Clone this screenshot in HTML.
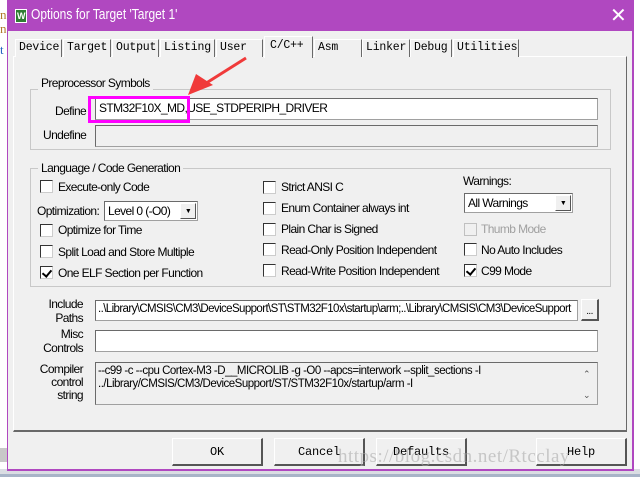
<!DOCTYPE html>
<html><head><meta charset="utf-8"><style>
*{margin:0;padding:0;box-sizing:border-box}
body{width:640px;height:477px;overflow:hidden;background:#fff;position:relative;font-family:"Liberation Sans",Arial,sans-serif;font-size:12px;color:#000;letter-spacing:-0.6px}
.a{position:absolute}
.mono{font-family:"Liberation Mono","DejaVu Sans Mono",monospace;font-size:11.5px;letter-spacing:-0.2px}
.tab{position:absolute;top:39px;height:18px;border:1px solid #fff;border-right:1px solid #696969;border-bottom:none;padding:1px 0 0 3px;background:#f0f0f0}
.cb{position:absolute;width:13px;height:13px;background:#fff;border:1px solid #333;border-right-color:#ccc;border-bottom-color:#ccc}
.cb.k::after{content:"";position:absolute;left:3px;top:1px;width:4px;height:7px;border:solid #000;border-width:0 2px 2px 0;transform:rotate(40deg)}
.lbl{position:absolute;font-size:12px}
.grp{position:absolute;border:1px solid #c8c8c8}
.inp{position:absolute;background:#fff;border:1px solid #a0a0a0;border-top-color:#6a6a6a;border-left-color:#6a6a6a}
.btn{position:absolute;top:438px;height:28px;width:91px;border:1px solid #fff;border-right:2px solid #555;border-bottom:2px solid #555;background:#f0f0f0;text-align:center;padding-top:6px;font-family:"Liberation Mono",monospace;font-size:12px;letter-spacing:-0.2px}
</style></head><body>
<div class="a" style="left:0;top:0;width:7px;height:477px;background:#fff"></div>
<div class="a" style="left:0;top:8px;color:#b07a2a;font-family:'Liberation Serif';font-size:13px;line-height:14px">n<br>n</div>
<div class="a" style="left:0;top:42px;color:#2060c0;font-family:'Liberation Serif';font-size:13px">t</div>
<div class="a" style="left:0;top:448px;width:8px;height:14px;background:#c8c8c8"></div>
<div class="a" style="left:0;top:469px;width:640px;height:8px;background:#dadde3"></div>
<div class="a" style="left:0;top:474px;width:640px;height:3px;background:#a8b4c8"></div>
<div class="a" style="left:7px;top:0;width:627px;height:471px;background:#b048c0"></div>
<div class="a" style="left:8px;top:31px;width:624px;height:438px;background:#f0f0f0"></div>
<div class="a" style="left:15px;top:9px;width:12px;height:14px;background:#2e7d32;border:1px solid #fff;color:#fff;font-size:9px;font-weight:bold;text-align:center;line-height:12px">W</div>
<div class="a" style="left:31px;top:6px;color:#fff;font-size:15px;letter-spacing:0;transform:scaleX(0.8);transform-origin:left;white-space:nowrap">Options for Target 'Target 1'</div>
<div class="a" style="left:610px;top:3px;color:#fff;font-size:20px;font-weight:300">✕</div>
<div class="a" style="left:13px;top:56px;width:614px;height:376px;border:1px solid #fff;border-right:1px solid #696969;border-bottom:2px solid #696969"></div>
<div class="tab mono" style="left:15px;width:47px">Device</div>
<div class="tab mono" style="left:63px;width:48px">Target</div>
<div class="tab mono" style="left:112px;width:47px">Output</div>
<div class="tab mono" style="left:160px;width:55px">Listing</div>
<div class="tab mono" style="left:216px;width:47px">User</div>
<div class="tab mono" style="left:264px;top:36px;height:22px;width:49px;padding:2px 0 0 5px">C/C++</div>
<div class="tab mono" style="left:314px;width:48px">Asm</div>
<div class="tab mono" style="left:362px;width:48px">Linker</div>
<div class="tab mono" style="left:410px;width:42px">Debug</div>
<div class="tab mono" style="left:453px;width:66px">Utilities</div>
<div class="grp" style="left:30px;top:89px;width:581px;height:61px"></div>
<div class="lbl" style="left:38px;top:76px;background:#f0f0f0;padding:0 3px">Preprocessor Symbols</div>
<div class="lbl" style="left:55px;top:104px">Define</div>
<div class="inp" style="left:95px;top:98px;width:503px;height:22px;padding:2px 0 0 3px">STM32F10X_MD,USE_STDPERIPH_DRIVER</div>
<div class="lbl" style="left:43px;top:128px">Undefine</div>
<div class="inp" style="left:95px;top:125px;width:503px;height:22px;background:#f0f0f0"></div>
<div class="a" style="left:88px;top:96px;width:102px;height:27px;border:3px solid #ff00ff"></div>
<svg class="a" style="left:180px;top:55px" width="75" height="48"><line x1="66" y1="3" x2="20" y2="32" stroke="#f03a3a" stroke-width="3"/><polygon points="8,40 16,19 33,30" fill="#f03a3a"/></svg>
<div class="grp" style="left:30px;top:168px;width:581px;height:119px"></div>
<div class="lbl" style="left:38px;top:161px;background:#f0f0f0;padding:0 3px">Language / Code Generation</div>
<div class="cb" style="left:40px;top:180px"></div><div class="lbl" style="left:58px;top:180px">Execute-only Code</div>
<div class="lbl" style="left:37px;top:204px">Optimization:</div>
<div class="inp" style="left:104px;top:201px;width:94px;height:20px;padding:2px 0 0 3px">Level 0 (-O0)</div>
<div class="a" style="left:180px;top:203px;width:16px;height:16px;background:#f0f0f0;border:1px solid #fff;border-right-color:#555;border-bottom-color:#555;font-size:7px;text-align:center;line-height:15px">▼</div>
<div class="cb" style="left:40px;top:224px"></div><div class="lbl" style="left:58px;top:223px">Optimize for Time</div>
<div class="cb" style="left:40px;top:245px"></div><div class="lbl" style="left:58px;top:245px">Split Load and Store Multiple</div>
<div class="cb k" style="left:40px;top:266px"></div><div class="lbl" style="left:58px;top:266px">One ELF Section per Function</div>
<div class="cb" style="left:263px;top:181px"></div><div class="lbl" style="left:281px;top:180px">Strict ANSI C</div>
<div class="cb" style="left:263px;top:202px"></div><div class="lbl" style="left:281px;top:201px">Enum Container always int</div>
<div class="cb" style="left:263px;top:223px"></div><div class="lbl" style="left:281px;top:222px">Plain Char is Signed</div>
<div class="cb" style="left:263px;top:243px"></div><div class="lbl" style="left:281px;top:243px">Read-Only Position Independent</div>
<div class="cb" style="left:263px;top:264px"></div><div class="lbl" style="left:281px;top:264px">Read-Write Position Independent</div>
<div class="lbl" style="left:463px;top:174px">Warnings:</div>
<div class="inp" style="left:464px;top:193px;width:109px;height:20px;padding:2px 0 0 3px">All Warnings</div>
<div class="a" style="left:555px;top:195px;width:16px;height:16px;background:#f0f0f0;border:1px solid #fff;border-right-color:#555;border-bottom-color:#555;font-size:7px;text-align:center;line-height:15px">▼</div>
<div class="cb" style="left:464px;top:223px;background:#f0f0f0;border-color:#c0c0c0"></div><div class="lbl" style="left:481px;top:222px;color:#a0a0a0">Thumb Mode</div>
<div class="cb" style="left:464px;top:243px"></div><div class="lbl" style="left:481px;top:243px">No Auto Includes</div>
<div class="cb k" style="left:464px;top:264px"></div><div class="lbl" style="left:481px;top:264px">C99 Mode</div>
<div class="lbl" style="left:20px;top:297px;width:63px;text-align:right;line-height:14px">Include<br>Paths</div>
<div class="inp" style="left:95px;top:300px;width:483px;height:21px;padding:2px 0 0 2px;overflow:hidden;white-space:nowrap;font-size:11.5px;letter-spacing:-0.6px">..\Library\CMSIS\CM3\DeviceSupport\ST\STM32F10x\startup\arm;..\Library\CMSIS\CM3\DeviceSupport</div>
<div class="a" style="left:581px;top:299px;width:18px;height:22px;border:1px solid #fff;border-right:2px solid #555;border-bottom:2px solid #555;text-align:center;font-size:10px;padding-top:6px">...</div>
<div class="lbl" style="left:20px;top:327px;width:63px;text-align:right;line-height:14px">Misc<br>Controls</div>
<div class="inp" style="left:95px;top:330px;width:503px;height:22px"></div>
<div class="lbl" style="left:20px;top:363px;width:63px;text-align:right;line-height:13px">Compiler<br>control<br>string</div>
<div class="inp" style="left:95px;top:362px;width:503px;height:43px;background:#f0f0f0;padding:2px 0 0 2px;line-height:13px;font-size:11.5px;letter-spacing:-0.5px">--c99 -c --cpu Cortex-M3 -D__MICROLIB -g -O0 --apcs=interwork --split_sections -I<br>../Library/CMSIS/CM3/DeviceSupport/ST/STM32F10x/startup/arm -I</div>
<div class="a" style="left:583px;top:369px;font-size:9px;color:#555">⌃</div>
<div class="a" style="left:583px;top:390px;font-size:9px;color:#555">⌄</div>
<div class="btn" style="left:172px">OK</div>
<div class="btn" style="left:274px">Cancel</div>
<div class="btn" style="left:376px">Defaults</div>
<div class="btn" style="left:536px">Help</div>
<div class="a" style="left:338px;top:446px;color:rgba(170,170,170,0.6);font-family:'Liberation Serif',serif;font-size:19px;letter-spacing:0.5px">https://blog.csdn.net/Rtcclay</div>
</body></html>
